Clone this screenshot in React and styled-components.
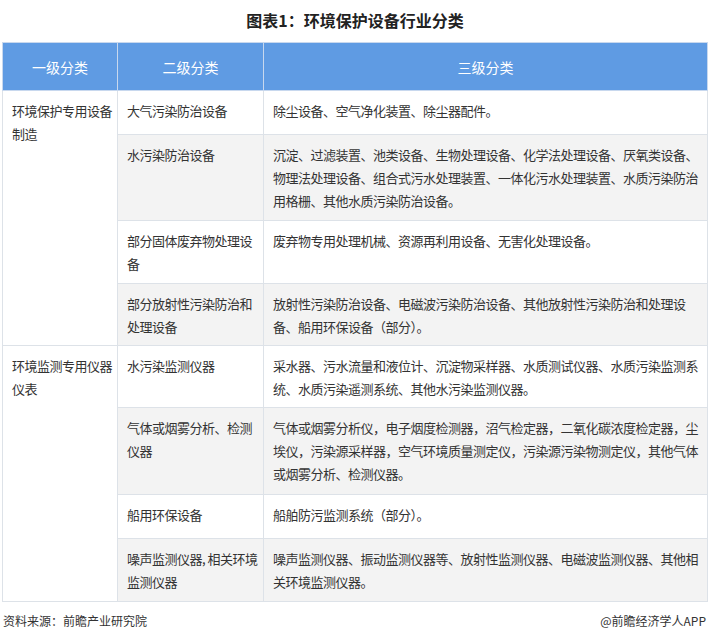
import React from "react";
import styled, { createGlobalStyle } from "styled-components";

const G = createGlobalStyle`
  body { margin: 0; background: #fff; font-family: "Noto Sans CJK SC", "Noto Sans", sans-serif; }
`;
const Page = styled.div`width: 710px; height: 642px; display: flex; flex-direction: column; align-items: stretch;`;
const Title = styled.h1`margin: 0; height: 42px; line-height: 40px; text-align: center; font-size: 16px; font-weight: 700; color: #222;`;
const Table = styled.table`
  margin: 0 2px; width: 706px; border-collapse: collapse; table-layout: fixed; font-size: 13px; color: #333;
  border: 1px solid #d6dde6;
`;
const Th = styled.th`
  background: #5f9be3; color: #fff; font-weight: 400; font-size: 14px; height: 45px;
  border: 1px solid #c8d8ee; text-align: center;
`;
const Td = styled.td`
  border: 1px solid #dde2e8; vertical-align: top; padding: 8px 3px 0 9px; line-height: 23px;
  letter-spacing: -0.5px;
  background: ${p => (p.$gray ? "#f3f3f3" : "#fff")};
`;
const Footer = styled.div`display: flex; justify-content: space-between; padding: 10px 4px 0 3px; font-size: 12px; color: #333;`;

const groups = [
  ["环境保护专用设备制造", [
    ["大气污染防治设备", "除尘设备、空气净化装置、除尘器配件。", 44],
    ["水污染防治设备", "沉淀、过滤装置、池类设备、生物处理设备、化学法处理设备、厌氧类设备、物理法处理设备、组合式污水处理装置、一体化污水处理装置、水质污染防治用格栅、其他水质污染防治设备。", 86],
    ["部分固体废弃物处理设备", "废弃物专用处理机械、资源再利用设备、无害化处理设备。", 63],
    ["部分放射性污染防治和处理设备", "放射性污染防治设备、电磁波污染防治设备、其他放射性污染防治和处理设备、船用环保设备（部分）。", 62],
  ]],
  ["环境监测专用仪器仪表", [
    ["水污染监测仪器", "采水器、污水流量和液位计、沉淀物采样器、水质测试仪器、水质污染监测系统、水质污染遥测系统、其他水污染监测仪器。", 62],
    ["气体或烟雾分析、检测仪器", "气体或烟雾分析仪，电子烟度检测器，沼气检定器，二氧化碳浓度检定器，尘埃仪，污染源采样器，空气环境质量测定仪，污染源污染物测定仪，其他气体或烟雾分析、检测仪器。", 87],
    ["船用环保设备", "船舶防污监测系统（部分）。", 44],
    ["噪声监测仪器, 相关环境监测仪器", "噪声监测仪器、振动监测仪器等、放射性监测仪器、电磁波监测仪器、其他相关环境监测仪器。", 63],
  ]],
];

export default function App() {
  return (
    <Page>
      <G />
      <Title>图表1：环境保护设备行业分类</Title>
      <Table>
        <colgroup><col style={{ width: 115 }} /><col style={{ width: 146 }} /><col /></colgroup>
        <thead><tr><Th>一级分类</Th><Th>二级分类</Th><Th>三级分类</Th></tr></thead>
        <tbody>
          {groups.map(([g, rows]) => rows.map((r, i) => (
            <tr key={g + i} style={{ height: r[2] }}>
              {i === 0 && <Td rowSpan={rows.length}>{g}</Td>}
              <Td $gray={i % 2 === 1}>{r[0]}</Td>
              <Td $gray={i % 2 === 1}>{r[1]}</Td>
            </tr>
          )))}
        </tbody>
      </Table>
      <Footer><span>资料来源：前瞻产业研究院</span><span>@前瞻经济学人APP</span></Footer>
    </Page>
  );
}
